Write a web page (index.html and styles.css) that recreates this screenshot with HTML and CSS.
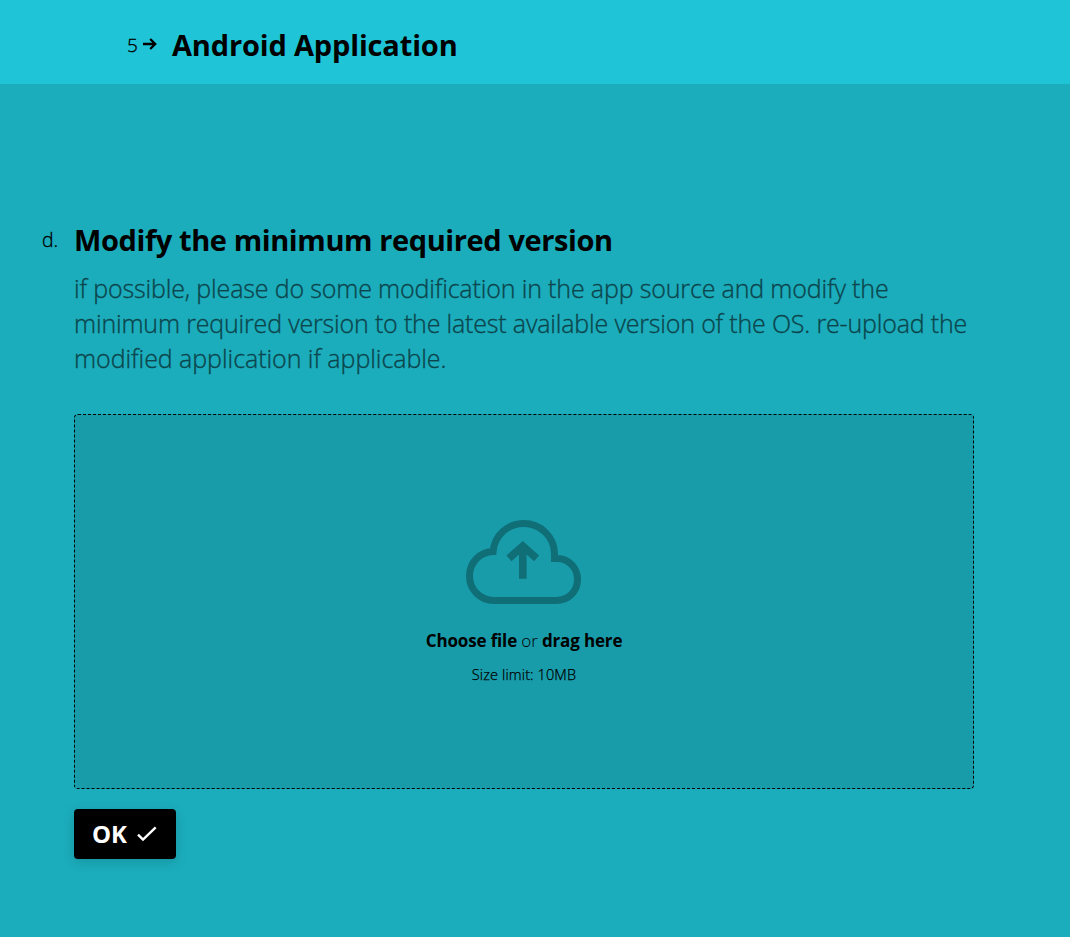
FILE: index.html
```html
<!DOCTYPE html>
<html lang="en">
<head>
<meta charset="utf-8">
<title>Android Application</title>
<link rel="stylesheet" href="styles.css">
</head>
<body>
<header class="bar">
  <span class="bar-number">5</span>
  <svg class="bar-arrow" width="14" height="12" viewBox="0 0 14 12"><path d="M0 6H12M7.2 1L12.2 6L7.2 11" fill="none" stroke="#000" stroke-width="2.3"/></svg>
  <h1 class="bar-title">Android Application</h1>
</header>
<main class="question">
  <span class="letter">d.</span>
  <div class="content">
    <h2 class="title">Modify the minimum required version</h2>
    <p class="description"><span class="line line-a">if possible, please do some modification in the app source and modify the</span> <span class="line line-b">minimum required version to the latest available version of the OS. re-upload the</span> <span class="line line-c">modified application if applicable.</span></p>
    <div class="dropzone">
      <svg class="cloud" width="115" height="84" viewBox="0 0 115 84"><g fill="none" stroke="#106e77" stroke-width="7"><path d="M28 80.5C14 80.5 3.5 69.5 3.5 56C3.5 42.5 14 31.8 27.1 31.5C28.5 15.5 41.5 3.5 57.7 3.5C74.7 3.5 88.5 17 88.5 34V38.4H91C103 38.4 111.5 48 111.5 59.5C111.5 71 103 80.5 90 80.5Z"/><path stroke-width="7.6" d="M56.8 58.7V26M43 38.3L56.8 26L70.6 38.3"/></g></svg>
      <p class="choose"><b>Choose file</b> or <b>drag here</b></p>
      <p class="limit">Size limit: 10MB</p>
    </div>
    <button class="ok"><span>OK</span><svg width="20" height="16" viewBox="0 0 20 16"><path d="M1 8.6L6 13.6L18.7 1.4" fill="none" stroke="#fff" stroke-width="2.4"/></svg></button>
  </div>
</main>
</body>
</html>
```

FILE: styles.css
```css
* { box-sizing: border-box; }
body {
  margin: 0;
  min-height: 937px;
  background: #1badbc;
  color: #000;
  font-family: "Open Sans", "Noto Sans", sans-serif;
  font-weight: 300;
}
h1, h2, p { margin: 0; }
b { font-weight: 700; }
.bar {
  display: flex;
  align-items: center;
  height: 84px;
  padding: 0 0 0 127px;
  background: #1fc5d6;
}
.bar-number { width: 16px; font-size: 19px; line-height: 24px; margin-top: 6px; -webkit-text-stroke: .3px; }
.bar-arrow { margin-top: 4px; }
.bar-title { margin: 5px 0 0 15px; font-size: 29px; line-height: 40px; letter-spacing: -.16px; white-space: nowrap; }
.question { display: flex; padding: 136px 0 0 42px; }
.letter { width: 32px; padding-top: 8px; font-size: 19.5px; line-height: 24px; -webkit-text-stroke: .3px; }
.content { width: 900px; }
.title { font-size: 29px; line-height: 40px; letter-spacing: -.4px; white-space: nowrap; }
.description {
  margin-top: 11px;
  color: #0c454c;
  font-size: 25px;
  line-height: 35px;
  -webkit-text-stroke: .35px;
}
.line { display: block; white-space: nowrap; }
.line-a { letter-spacing: -.15px; }
.line-b { letter-spacing: -.175px; }
.line-c { letter-spacing: -.05px; }
.dropzone {
  display: flex;
  flex-direction: column;
  align-items: center;
  height: 375px;
  margin-top: 38px;
  padding-top: 105px;
  border: 1px dashed #000;
  border-radius: 4px;
  background: #189caa;
}
.cloud { margin-right: 1px; }
.choose { margin-top: 25px; font-size: 17px; line-height: 24px; letter-spacing: -.15px; white-space: nowrap; }
.limit { margin-top: 12px; font-size: 14.5px; line-height: 20px; letter-spacing: .12px; white-space: nowrap; -webkit-text-stroke: .25px; }
.ok {
  display: flex;
  align-items: center;
  width: 102px;
  height: 50px;
  margin-top: 20px;
  padding: 0 18px;
  gap: 10px;
  border: 0;
  border-radius: 4px;
  background: #000;
  color: #fff;
  box-shadow: 0 3px 12px rgba(0, 0, 0, .15);
  font: bold 24px/34px "Open Sans", sans-serif;
}
```
